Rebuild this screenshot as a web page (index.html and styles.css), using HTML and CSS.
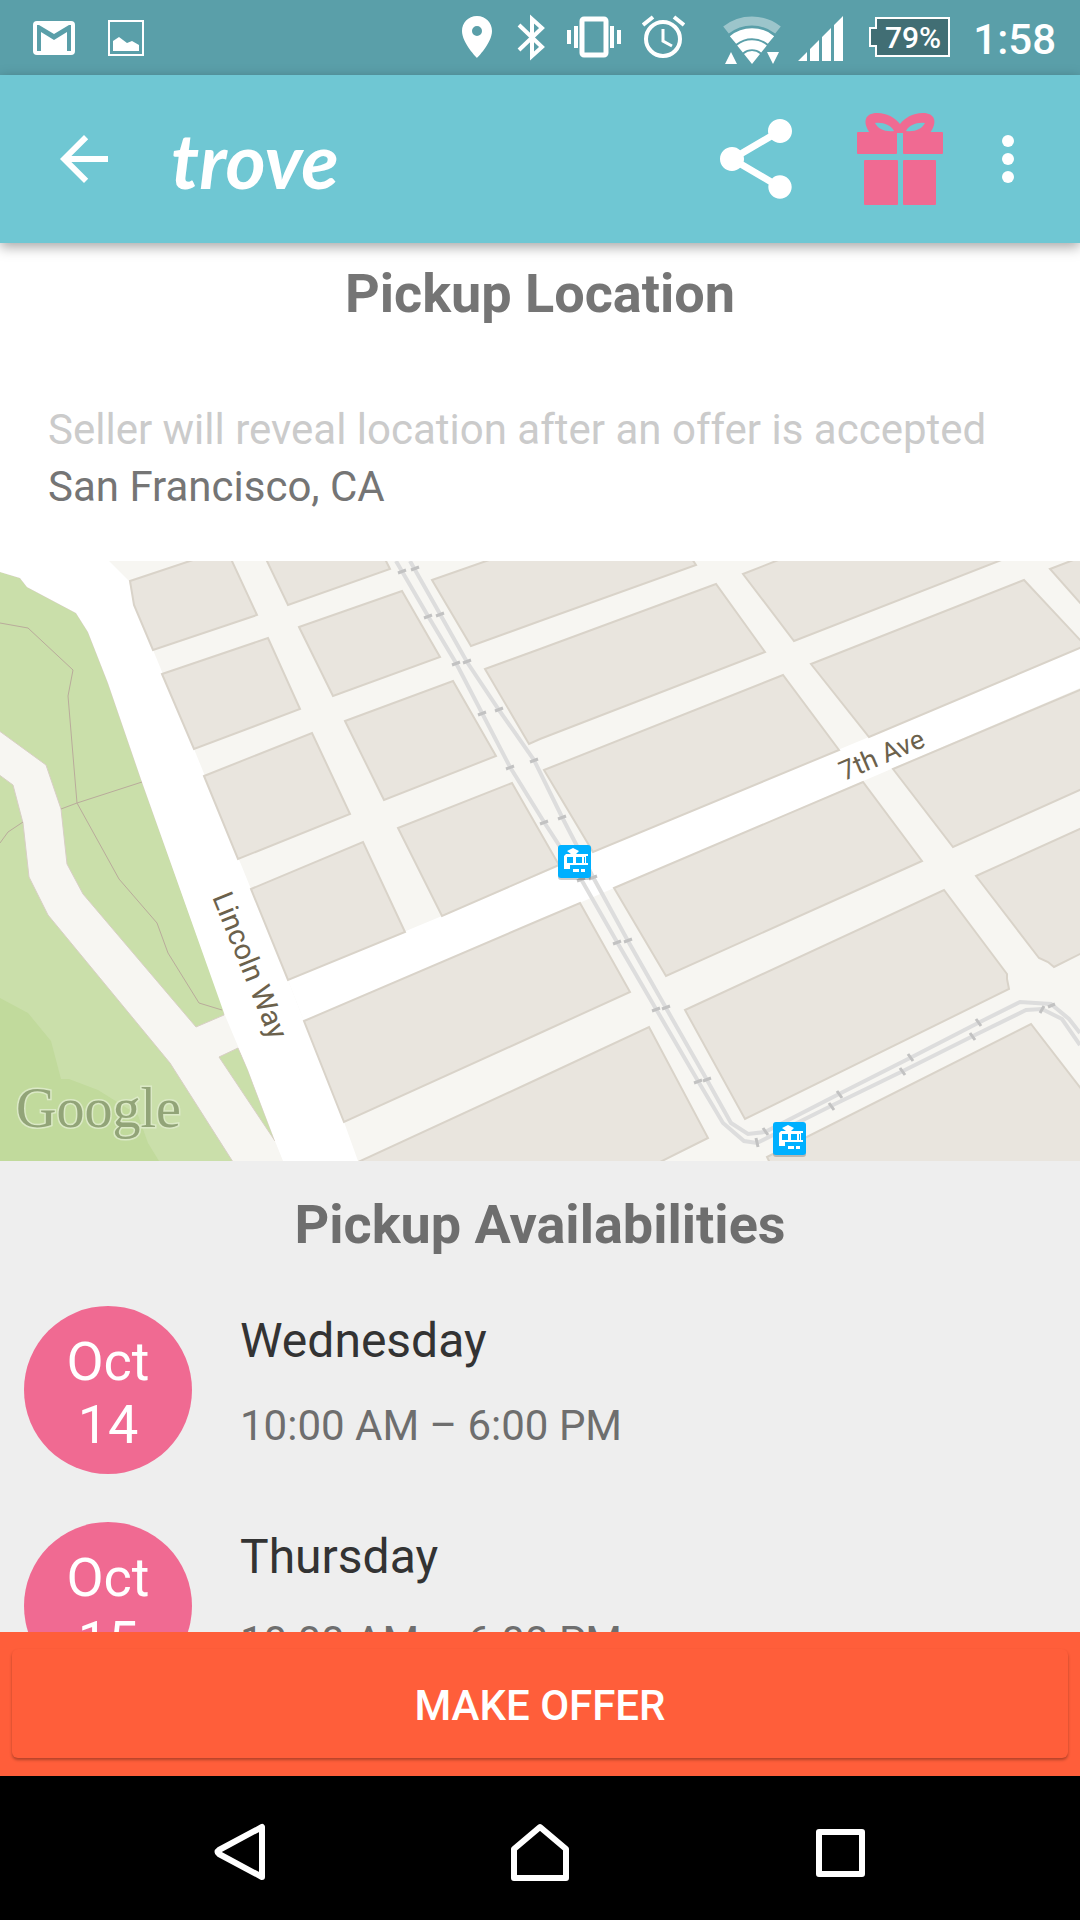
FILE: index.html
```html
<!DOCTYPE html>
<html lang="en">
<head>
    <meta charset="UTF-8">
    <meta name="viewport" content="width=device-width, initial-scale=1.0">
    <title>Trove</title>
    <link rel="stylesheet" href="styles.css">
</head>
<body>
    <div class="status-bar">
        <div class="status-left">
            <svg width="42" height="75" viewBox="0 0 42 75">
                <rect y="21" width="42" height="34" rx="4" fill="#fff"/>
                <path d="M4 25h2l15 9 15-9h2v26h-4V32l-13 8-13-8v19H4z" fill="#5a9fa9"/>
            </svg>
            <svg width="36" height="75" viewBox="0 0 36 75">
                <rect x="1" y="21" width="34" height="34" fill="none" stroke="#fff" stroke-width="2"/>
                <path d="M5 51V41l6-4 8 6 5-2 7 4v6z" fill="#fff"/>
            </svg>
        </div>
        <div class="status-right">
            <svg width="35" height="75" viewBox="0 0 35 75">
                <path d="M17 16C8 16 2 23 2 31c0 12 15 27 15 27s15-15 15-27c0-8-6-15-15-15zm0 10a5 5 0 1 1 0 10 5 5 0 0 1 0-10z" fill="#fff" fill-rule="evenodd"/>
            </svg>
            <svg width="30" height="75" viewBox="0 0 30 75">
                <path d="M3 25l23 22-10 9V19l10 9L3 50" fill="none" stroke="#fff" stroke-width="4"/>
            </svg>
            <svg width="54" height="75" viewBox="0 0 54 75">
                <rect x="15" y="19" width="24" height="36" rx="2" fill="none" stroke="#fff" stroke-width="5"/>
                <path d="M0 30h4v14H0zM7 26h4v22H7zM43 26h4v22h-4zM50 30h4v14h-4z" fill="#fff"/>
            </svg>
            <svg width="43" height="75" viewBox="0 0 43 75">
                <g fill="none" stroke="#fff" stroke-width="4">
                    <circle cx="21" cy="39" r="17"/>
                    <path d="M1 25l10-8M32 17l10 8"/>
                    <path d="M21 29v12l9 5" stroke-width="3"/>
                </g>
            </svg>
            <svg width="140" height="75" viewBox="0 0 140 75">
                <g fill="none" stroke="#fff">
                    <path d="M20 30a42 42 0 0 1 52 0" stroke-width="9" opacity=".4"/>
                    <path d="M27 40a30 30 0 0 1 38 0" stroke-width="10"/>
                    <path d="M34 49a19 19 0 0 1 24 0" stroke-width="9"/>
                </g>
                <path d="M46 64l-8-10a12 12 0 0 1 16 0zM19 64l6-12 6 12zM61 52h12l-6 12z" fill="#fff"/>
                <path d="M92 61l9-9v9zM104 61V49l9-9v21zM116 61V37l9-9v33zM128 61V25l9-9v45z" fill="#fff"/>
            </svg>
            <svg width="85" height="75" viewBox="0 0 85 75">
                <path d="M9 18h73v38H9V46H3V28h6z" fill="#416e74" stroke="#fff" stroke-width="2"/>
                <text x="46" y="48" class="battery-level">79%</text>
            </svg>
            <span class="clock">1:58</span>
        </div>
    </div>

    <header class="app-bar">
        <button class="icon-button" aria-label="Back">
            <svg width="72" height="72" viewBox="0 0 24 24"><path d="M20 11H7.800l5.600-5.600L12 4l-8 8 8 8 1.400-1.400L7.800 13H20z" fill="#fff"/></svg>
        </button>
        <a href="#" class="logo">trove</a>
        <button class="icon-button share" aria-label="Share">
            <svg width="96" height="96" viewBox="0 0 24 24"><path d="M18 16.080c-.76 0-1.440.3-1.960.77L8.910 12.700c.05-.23.09-.46.09-.7s-.04-.47-.09-.7l7.050-4.110c.54.5 1.250.81 2.040.81 1.660 0 3-1.340 3-3s-1.340-3-3-3-3 1.340-3 3c0 .24.04.47.09.7L8.040 9.810C7.500 9.310 6.790 9 6 9c-1.660 0-3 1.340-3 3s1.340 3 3 3c.79 0 1.500-.31 2.040-.81l7.120 4.160c-.05.21-.08.43-.08.65 0 1.610 1.310 2.920 2.920 2.920s2.920-1.310 2.920-2.920-1.310-2.920-2.920-2.920z" fill="#fff"/></svg>
        </button>
        <button class="icon-button gift" aria-label="Gifts">
            <svg width="86" height="92" viewBox="0 0 86 92">
                <g fill="#f06a92">
                    <path d="M13 20C5 9 8 0 20 0c11 0 18 5 23 11C48 5 55 0 66 0c12 0 15 9 7 20zM18 10c3 6 10 9 19 8-3-6-11-9-19-8zM68 10c-8-1-16 2-19 8 9 1 16-2 19-8z" fill-rule="evenodd"/>
                    <rect y="19" width="40" height="22" rx="1"/>
                    <rect x="46" y="19" width="40" height="22" rx="1"/>
                    <rect x="7" y="47" width="34" height="45" rx="1"/>
                    <rect x="46" y="47" width="33" height="45" rx="1"/>
                </g>
            </svg>
        </button>
        <button class="icon-button" aria-label="More options">
            <svg width="72" height="72" viewBox="0 0 24 24"><g fill="#fff"><circle cx="12" cy="6" r="2"/><circle cx="12" cy="12" r="2"/><circle cx="12" cy="18" r="2"/></g></svg>
        </button>
    </header>

    <main class="content">
        <section class="location">
            <h2>Pickup Location</h2>
            <p class="hint">Seller will reveal location after an offer is accepted</p>
            <p>San Francisco, CA</p>
        </section>

        <svg class="map" viewBox="0 0 1080 600" preserveAspectRatio="xMidYMid slice">
            <defs>
                <g id="station">
                    <rect y="2" width="33" height="33" rx="3" fill="#000" opacity=".2"/>
                    <rect width="33" height="33" rx="3" fill="#00b0ff"/>
                    <path d="M9 6l6-3 6 3-3 3h12v2h-2v7h2v2H12v4H6V11l2-2h5zM9 12v6h6v-6zM18 12v6h6v-6zM26 12v6h1v-6zM15 24h6v3h-6zM23 24h4v3h-4z" fill="#fff" fill-rule="evenodd"/>
                </g>
            </defs>
            <rect width="1080" height="600" fill="#f7f6f2"/>

            <!-- park -->
            <g fill="#cadfaa" stroke="#d8cfc5" stroke-width="1">
                <path d="M-2 10L20 17l7 9 49 26 12 19 20 51 34 99 82 228v5l-28 12L83 333 67 303l-6-55-15-44L-2 169z"/>
                <path d="M-2 213l15 11 10 38 6 54 19 38 122 148 63 99H-2z"/>
                <path d="M219 496l19-9 10 22 5 14 22 57z"/>
            </g>
            <path d="M0 437l28 15 23 28 10 38h8l29 11 40 25 10 28 11 18H0z" fill="#c1da9c"/>
            <g fill="none" stroke="#b9ab9b" stroke-width="1">
                <path d="M0 62l28 5 45 42-5 26 9 107 42 76 38 44 11 30 31 50 23 7"/>
                <path d="M61 248l16-6 65-21M0 282l8-11 15-10"/>
            </g>

            <!-- main roads -->
            <path d="M0 0h109l20 20 5 24 19 45 41 99 57 140 37 91 16 41 40 101 14 39h-75l-8-20-27-71-24-57-82-231-34-99-20-51-12-19-49-26-7-9-20-6z" fill="#fff"/>
            <path d="M288 419l154-64 151-64 276-115 211-89v40L614 327l-74 32-236 101z" fill="#fff"/>

            <!-- blocks -->
            <g fill="#e9e5de" stroke="#d9d3c9" stroke-width="2">
                <path d="M130 20l66-22h35l26 56-104 35-19-45z"/>
                <path d="M266-2h119l5 10-102 36z"/>
                <path d="M162 113l106-36 32 71-106 40z"/>
                <path d="M299 66l103-36 38 66-107 39z"/>
                <path d="M204 215l108-43 38 81-112 45z"/>
                <path d="M345 160l108-40 43 75-112 44z"/>
                <path d="M251 328l112-47 42 90-117 48z"/>
                <path d="M398 267l114-45 47 82-117 51z"/>
                <path d="M432 19l60-21h200l4 6-156 56-69 25z"/>
                <path d="M485 108l55-20 176-65 49 68-225 87-11 5z"/>
                <path d="M544 209l239-95 56 75-246 102z"/>
                <path d="M743 13l38-15h223L794 80z"/>
                <path d="M811 103l213-84 58 62v5L869 176z"/>
                <path d="M1050 8l26-10h6v46z"/>
                <path d="M893 208l189-80v100l-129 58z"/>
                <path d="M614 327l249-106 59 79-256 115z"/>
                <path d="M304 460l236-101 40-17 50 89-90 41-196 89z"/>
                <path d="M976 315l106-48v125l-28 14-6-5-9-4z"/>
                <path d="M685 449l259-120 63 84v5l2 10-264 130z"/>
                <path d="M356 602l184-85 109-51 59 111-50 25z"/>
                <path d="M770 602l-3-6 264-133 51 66v73z"/>
            </g>

            <!-- tram lines -->
            <g fill="none" stroke="#ddd" stroke-width="4">
                <path d="M396 0L428 55 456 102 482 152 510 206 544 261 581 318 617 381 656 448 698 520 723 562 744 580 757 582 831 545 903 510 973 475 1026 449 1042 448 1062 458 1080 484"/>
                <path d="M410 0L440 53 467 101 499 149 534 199 562 256 593 316 628 380 666 447 707 519 731 562 748 573 765 571 839 533 910 497 978 462 1020 441 1051 443 1069 458 1080 472"/>
            </g>
            <g stroke="#c2c2c2" stroke-width="3">
                <path d="M398 12l8-3M411 9l8-3M424 57l8-3M436 55l8-3M452 104l8-3M463 102l8-3M478 154l8-3M495 150l8-3M506 208l8-3M530 201l8-3M540 263l8-3M558 258l8-3M577 320l8-3M589 318l8-3M613 383l8-3M624 381l8-3M652 450l8-3M662 448l8-3M694 522l8-3M703 520l8-3"/>
                <path d="M756 577l2 9M763 567l5 7M829 542l5 7M837 530l5 7M900 507l5 7M908 493l5 7M970 472l5 7M976 458l5 7M1040 452l4-7M1048 446l7-3"/>
            </g>
            <use href="#station" x="558" y="284"/>
            <use href="#station" x="773" y="561"/>

            <text class="street" transform="translate(212 336) rotate(68)">Lincoln Way</text>
            <text class="street street-small" transform="translate(844 220) rotate(-23)">7th Ave</text>
            <text class="attribution" x="16" y="566">Google</text>
        </svg>

        <section class="availabilities">
            <h2>Pickup Availabilities</h2>
            <ul>
                <li>
                    <div class="date">Oct<br>14</div>
                    <div class="slot">
                        <h3>Wednesday</h3>
                        <p>10:00 AM – 6:00 PM</p>
                    </div>
                </li>
                <li>
                    <div class="date">Oct<br>15</div>
                    <div class="slot">
                        <h3>Thursday</h3>
                        <p>10:00 AM – 6:00 PM</p>
                    </div>
                </li>
            </ul>
        </section>
    </main>

    <div class="action-bar">
        <button class="offer">MAKE OFFER</button>
    </div>

    <nav class="nav-bar">
        <button aria-label="Back">
            <svg width="60" height="60" viewBox="0 0 60 60"><path d="M52 5v50L9 32q-3-2 0-4z"/></svg>
        </button>
        <button aria-label="Home">
            <svg width="60" height="60" viewBox="0 0 60 60"><path d="M30 5l26 22v29H4V27z"/></svg>
        </button>
        <button aria-label="Recent apps">
            <svg width="60" height="60" viewBox="0 0 60 60"><path d="M9 10h43v42H9z"/></svg>
        </button>
    </nav>
</body>
</html>
```

FILE: styles.css
```css
* {
    box-sizing: border-box;
    margin: 0;
    padding: 0;
}
body {
    font-family: Roboto, sans-serif;
    display: flex;
    flex-direction: column;
    height: 100vh;
    background: white;
    color: #757575;
    font-size: 42px;
}
svg {
    display: block;
}
button {
    border: none;
    background: none;
    font-family: inherit;
    cursor: pointer;
}
.status-bar {
    display: flex;
    justify-content: space-between;
    height: 75px;
    padding: 0 24px 0 33px;
    background: #5a9fa9;
    color: white;
    flex-shrink: 0;
}
.status-left {
    display: flex;
    gap: 33px;
}
.status-right {
    display: flex;
    align-items: center;
    gap: 21px;
}
.battery-level {
    font-size: 30px;
    font-weight: 500;
    text-anchor: middle;
    fill: white;
}
.clock {
    font-weight: 500;
    line-height: 48px;
    padding-top: 4px;
}
.app-bar {
    display: flex;
    align-items: center;
    height: 168px;
    padding: 0 36px 0 48px;
    background: #6fc7d3;
    box-shadow: 0 4px 12px rgba(0,0,0,0.35);
    position: relative;
    flex-shrink: 0;
}
.logo {
    flex: 1;
    padding-left: 51px;
    font-family: Lato, sans-serif;
    font-size: 77px;
    font-style: italic;
    font-weight: bold;
    line-height: 84px;
    color: white;
    text-decoration: none;
}
.share {
    margin-right: 24px;
}
.gift {
    display: flex;
    justify-content: center;
    width: 144px;
}
.content {
    flex: 1;
    min-height: 0;
    overflow: hidden;
    background: #eee;
}
h2 {
    font-size: 54px;
    line-height: 64px;
    text-align: center;
}
.location {
    background: white;
    padding: 19px 48px 46px;
}
.location h2 {
    margin-bottom: 75px;
}
.location p {
    line-height: 57px;
}
.location .hint {
    color: #cbcbcb;
}
.map {
    width: 100%;
    height: 600px;
}
.street {
    font-size: 29px;
    fill: #6b614c;
    stroke: white;
    stroke-width: 4px;
    paint-order: stroke;
}
.street-small {
    font-size: 27px;
}
.attribution {
    font-family: "Liberation Serif", serif;
    font-size: 56px;
    fill: #92a478;
    stroke: #dbe9c6;
    stroke-width: 3px;
    paint-order: stroke;
}
.availabilities {
    padding: 32px 24px 0;
    color: #6e6e6e;
}
.availabilities h2 {
    margin-bottom: 49px;
}
.availabilities li {
    display: flex;
    gap: 48px;
    margin-bottom: 48px;
}
.date {
    width: 168px;
    height: 168px;
    padding: 24px 0;
    border-radius: 50%;
    background: #f06a92;
    color: white;
    font-size: 54px;
    line-height: 63px;
    text-align: center;
}
.slot h3 {
    font-size: 48px;
    font-weight: normal;
    line-height: 56px;
    padding-top: 7px;
    margin-bottom: 32px;
    color: #333;
}
.slot p {
    line-height: 50px;
}
.action-bar {
    padding: 17px 12px 18px;
    background: #ff5e3a;
    flex-shrink: 0;
}
.offer {
    display: block;
    width: 100%;
    height: 109px;
    padding-top: 4px;
    border-radius: 6px;
    background: #ff5e3a;
    box-shadow: 0 2px 3px rgba(0,0,0,0.3);
    color: white;
    font-size: 42px;
    font-weight: 500;
}
.nav-bar {
    display: grid;
    grid-template-columns: repeat(3, 1fr);
    height: 144px;
    padding: 8px 90px 0;
    background: black;
    flex-shrink: 0;
}
.nav-bar button {
    display: flex;
    justify-content: center;
    align-items: center;
}
.nav-bar path {
    fill: none;
    stroke: white;
    stroke-width: 6px;
    stroke-linejoin: round;
}
```
